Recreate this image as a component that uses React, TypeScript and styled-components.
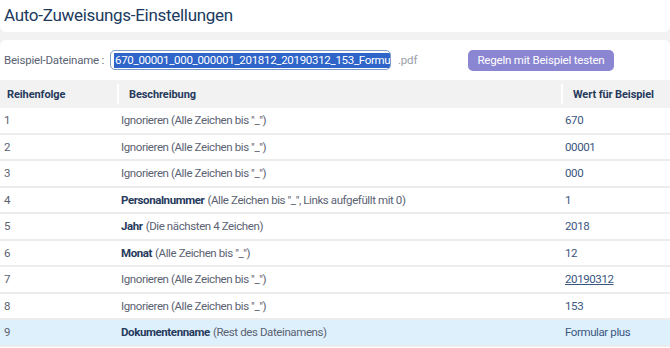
import React from "react";
import styled, { createGlobalStyle } from "styled-components";

const GlobalStyle = createGlobalStyle`
  body {
    margin: 0;
    background: #f2f2f2;
    font-family: Roboto, "Liberation Sans", Arial, sans-serif;
  }
`;

const colors = {
  title: "#203a5e",
  text: "#5b6272",
  strong: "#263a5c",
  value: "#3a5680",
  line: "#ececec",
  headerBg: "#f2f2f2",
  selected: "#dff0fd",
  button: "#8b86d1",
};

const Page = styled.div`
  width: 670px;
  height: 348px;
  overflow: hidden;
  display: flex;
  flex-direction: column;
  gap: 8px;
`;

const TitleBar = styled.div`
  background: #fff;
  height: 32px;
  flex-shrink: 0;
  border-radius: 0 0 6px 6px;
  padding: 4px 4px 0;
  box-sizing: border-box;
`;

const Title = styled.h1`
  margin: 0;
  font-size: 17px;
  line-height: 22px;
  font-weight: 400;
  color: ${colors.title};
  letter-spacing: -0.3px;
`;

const Panel = styled.div`
  flex: 1;
  background: #fff;
  border-radius: 6px 6px 0 0;
  display: flex;
  flex-direction: column;
`;

const SampleRow = styled.div`
  display: flex;
  align-items: center;
  height: 40px;
  flex-shrink: 0;
  padding: 0 4px;
  font-size: 11.5px;
  letter-spacing: -0.2px;
  color: ${colors.text};
`;

const Label = styled.span`
  width: 106px;
  flex-shrink: 0;
  white-space: nowrap;
`;

const FakeInput = styled.div`
  width: 281px;
  height: 20px;
  flex-shrink: 0;
  box-sizing: border-box;
  border: 1px solid #7d9cc8;
  border-radius: 5px;
  padding: 0 3px;
  overflow: hidden;
  white-space: nowrap;
  display: flex;
  align-items: center;
`;

const Selection = styled.span`
  background: #2f64c9;
  color: #fff;
  font-size: 11.5px;
  line-height: 15px;
  padding: 0 1px;
  letter-spacing: -0.3px;
`;

const Ext = styled.span`
  margin-left: 7px;
  color: #9a9ea8;
  width: 70px;
  flex-shrink: 0;
`;

const Button = styled.button`
  height: 21px;
  width: 146px;
  flex-shrink: 0;
  border: none;
  border-radius: 5px;
  background: ${colors.button};
  color: #fff;
  font-family: inherit;
  font-size: 11.5px;
  letter-spacing: -0.2px;
  padding: 0;
`;

const Table = styled.div`
  display: flex;
  flex-direction: column;
`;

const Row = styled.div<{ $header?: boolean; $selected?: boolean }>`
  display: grid;
  grid-template-columns: 117px 444px 1fr;
  height: ${(p) => (p.$header ? "28px" : "26.5px")};
  flex-shrink: 0;
  background: ${(p) => (p.$header ? colors.headerBg : p.$selected ? colors.selected : "#fff")};
  border-bottom: ${(p) => (p.$header ? "none" : `2px solid ${colors.line}`)};
  box-sizing: border-box;
  font-size: 11.5px;
  letter-spacing: -0.4px;
  color: ${colors.text};
`;

const Cell = styled.div<{ $value?: boolean }>`
  display: flex;
  align-items: center;
  padding-left: 4px;
  color: ${(p) => (p.$value ? colors.value : colors.text)};
  white-space: nowrap;
`;

const HeadCell = styled.div<{ $first?: boolean }>`
  display: flex;
  align-items: center;
  padding-left: ${(p) => (p.$first ? "7px" : "10px")};
  margin: 4px 0;
  border-left: ${(p) => (p.$first ? "none" : "2px solid #fff")};
  font-weight: 700;
  font-size: 11px;
  color: ${colors.strong};
  letter-spacing: -0.1px;
  white-space: nowrap;
`;

const Strong = styled.b`
  color: ${colors.strong};
  font-weight: 700;
  margin-right: 3px;
`;

const Linked = styled.span`
  text-decoration: underline;
`;

type Rule = { name?: string; desc: string; value: string; link?: boolean };

const ignore = 'Ignorieren (Alle Zeichen bis "_")';

const rules: Rule[] = [
  { desc: ignore, value: "670" },
  { desc: ignore, value: "00001" },
  { desc: ignore, value: "000" },
  { name: "Personalnummer", desc: '(Alle Zeichen bis "_", Links aufgefüllt mit 0)', value: "1" },
  { name: "Jahr", desc: "(Die nächsten 4 Zeichen)", value: "2018" },
  { name: "Monat", desc: '(Alle Zeichen bis "_")', value: "12" },
  { desc: ignore, value: "20190312", link: true },
  { desc: ignore, value: "153" },
  { name: "Dokumentenname", desc: "(Rest des Dateinamens)", value: "Formular plus" },
];

export default function App() {
  return (
    <>
      <GlobalStyle />
      <Page>
        <TitleBar>
          <Title>Auto-Zuweisungs-Einstellungen</Title>
        </TitleBar>
        <Panel>
          <SampleRow>
            <Label>Beispiel-Dateiname :</Label>
            <FakeInput>
              <Selection>670_00001_000_000001_201812_20190312_153_Formu</Selection>
            </FakeInput>
            <Ext>.pdf</Ext>
            <Button>Regeln mit Beispiel testen</Button>
          </SampleRow>
          <Table>
            <Row $header>
              <HeadCell $first>Reihenfolge</HeadCell>
              <HeadCell>Beschreibung</HeadCell>
              <HeadCell>Wert für Beispiel</HeadCell>
            </Row>
            {rules.map((r, i) => (
              <Row key={i} $selected={i === rules.length - 1}>
                <Cell>{i + 1}</Cell>
                <Cell>
                  {r.name && <Strong>{r.name}</Strong>}
                  {r.desc}
                </Cell>
                <Cell $value>{r.link ? <Linked>{r.value}</Linked> : r.value}</Cell>
              </Row>
            ))}
          </Table>
        </Panel>
      </Page>
    </>
  );
}
